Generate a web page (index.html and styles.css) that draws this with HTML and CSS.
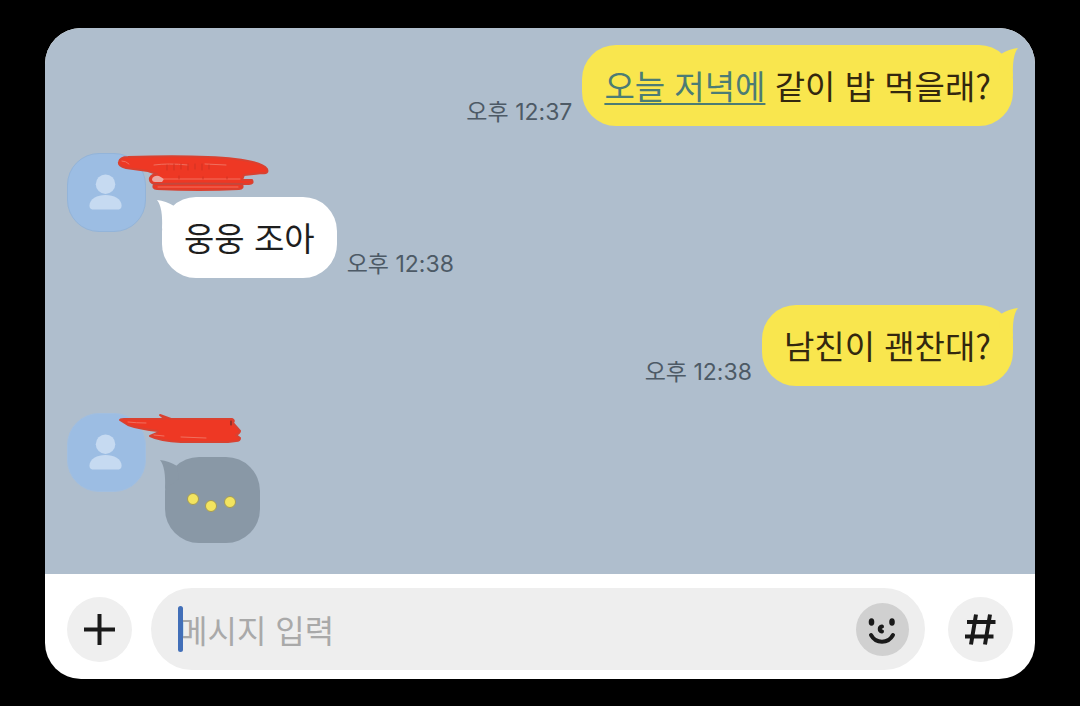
FILE: index.html
```
<!DOCTYPE html>
<html lang="ko">
<head>
    <meta charset="UTF-8">
    <meta name="viewport" content="width=device-width, initial-scale=1.0">
    <title>채팅</title>
    <link rel="stylesheet" href="styles.css">
</head>
<body>
    <div class="phone">
        <main class="chat">
            <div class="row mine">
                <time class="time">오후 12:37</time>
                <div class="bubble yellow">
                    <a href="#">오늘 저녁에</a> 같이 밥 먹을래?
                    <svg class="tail" viewBox="0 0 24 34"><path d="M7 9Q15 4 24 3Q18 10 19 32L5 22Z"/></svg>
                </div>
            </div>

            <div class="row">
                <div class="avatar">
                    <svg viewBox="0 0 79 79"><circle cx="38.500" cy="31" r="10"/><path d="M22 53C22 46 30 42 38.500 42S55 46 55 53Q55 57 50 57H27Q22 57 22 53Z"/></svg>
                </div>
                <div class="content">
                    <div class="name">
                        <svg class="scribble" viewBox="112 150 164 50">
                            <path d="M119 163Q120 158 128 158Q200 156 235 160Q262 163 267 170Q269 175 262 174L244 176L242 181H252Q254 185 249 185H242Q244 190 239 190Q200 192 157 190Q152 190 154 185Q149 183 150 179Q152 175 157 175L148 172L126 169Q118 167 119 163Z"/>
                            <path class="hole" d="M152 180Q154 176 159 177L164 180L162 183H155Q152 183 152 180Z"/>
                            <path class="seam" d="M154 185Q200 184 242 185"/>
                            <path class="gap" d="M122 162Q126 162 129 165M158 188H238M164 180H240M154 166Q168 164 188 166M205 165L226 166"/>
                            <path class="ticks" d="M167 166V171M174 165V171M181 165V170M188 165V171M195 165V170M202 165V171M209 166V170M179 177V180M203 178V180M227 178V180"/>
                        </svg>
                    </div>
                    <div class="line">
                        <div class="bubble white">웅웅 조아
                            <svg class="tail left" viewBox="0 0 24 34"><path d="M7 9Q15 4 24 3Q18 10 19 32L5 22Z"/></svg>
                        </div>
                        <time class="time">오후 12:38</time>
                    </div>
                </div>
            </div>

            <div class="row mine">
                <time class="time">오후 12:38</time>
                <div class="bubble yellow">남친이 괜찬대?
                    <svg class="tail" viewBox="0 0 24 34"><path d="M7 9Q15 4 24 3Q18 10 19 32L5 22Z"/></svg>
                </div>
            </div>

            <div class="row">
                <div class="avatar plain">
                    <svg viewBox="0 0 79 79"><circle cx="38.500" cy="31" r="10"/><path d="M22 53C22 46 30 42 38.500 42S55 46 55 53Q55 57 50 57H27Q22 57 22 53Z"/></svg>
                </div>
                <div class="content">
                    <div class="name">
                        <svg class="scribble" viewBox="112 410 164 50">
                            <path d="M120 421Q120 420 124 420L165 420L160 416L171 420H232Q235 421 233 424L240 432Q240 434 236 436L240 439Q240 442 236 442L228 443H181Q160 442 150 437L157 434L158 432Q140 430 128 426Z"/>
                            <path class="gap" d="M128 423Q136 424 146 424M154 436L164 437M181 438L206 439"/>
                            <path class="name-edge" d="M231 422V426"/>
                        </svg>
                    </div>
                    <div class="typing" role="img" aria-label="입력 중">
                        <svg class="dots" viewBox="0 0 95 86"><circle cx="28" cy="42" r="5.500"/><circle cx="46" cy="49" r="5.500"/><circle cx="65" cy="45" r="5.500"/></svg>
                        <svg class="tail left" viewBox="0 0 24 34"><path d="M7 9Q15 4 24 3Q18 10 19 32L5 22Z"/></svg>
                    </div>
                </div>
            </div>
        </main>

        <form class="input-bar">
            <button class="round-btn" type="button" aria-label="추가">
                <svg viewBox="0 0 65 65"><path d="M32.500 17V48M17 32.500H48"/></svg>
            </button>
            <div class="field">
                <span class="caret"></span>
                <input type="text" placeholder="메시지 입력" aria-label="메시지 입력">
                <button class="emoji-btn" type="button" aria-label="이모티콘">
                    <svg viewBox="0 0 53 53">
                        <ellipse cx="15.500" cy="19" rx="2.800" ry="3.800"/>
                        <ellipse cx="36" cy="19" rx="2.800" ry="3.800"/>
                        <path d="M15 32C20 41 32 41 37 32"/>
                        <path d="M26 23.500C23 24 23 28 26 28.500"/>
                    </svg>
                </button>
            </div>
            <button class="round-btn" type="button" aria-label="샵 검색">
                <svg viewBox="0 0 65 65"><path d="M28 17.500L23 47.500M42 17.500L37 47.500M19 25H47.500M17 39.500H45.500"/></svg>
            </button>
        </form>
    </div>
</body>
</html>
```
FILE: styles.css
```
* {
    box-sizing: border-box;
}
body {
    display: flex;
    min-height: 100vh;
    margin: 0;
    padding: 28px 45px 27px;
    background-color: #000;
    font-family: "Noto Sans CJK KR", sans-serif;
    color: #1e1e1e;
}
.phone {
    display: flex;
    flex-direction: column;
    flex: 1;
    border-radius: 36px;
    overflow: hidden;
    background-color: #fff;
}
.chat {
    display: flex;
    flex-direction: column;
    flex: 1;
    gap: 27px;
    padding: 17px 22px;
    background-color: #afbecd;
}
.row {
    display: flex;
    gap: 16px;
}
.mine {
    justify-content: flex-end;
    align-items: flex-end;
    gap: 10px;
}
.line {
    display: flex;
    align-items: flex-end;
    gap: 10px;
}

/* bubbles */
.bubble {
    position: relative;
    padding: 16px 22px 17px;
    border-radius: 34px;
    font-size: 33px;
    line-height: 48px;
}
.yellow {
    background-color: #f9e64e;
    color: #33280f;
}
.yellow .tail {
    fill: #f9e64e;
}
.yellow a {
    color: #4c7c74;
    text-decoration: underline;
    text-decoration-thickness: 2px;
    text-underline-offset: 4px;
}
.white {
    background-color: #fff;
}
.white .tail {
    fill: #fff;
}
.tail {
    position: absolute;
    top: 0;
    right: -5px;
    width: 24px;
    height: 34px;
}
.tail.left {
    right: auto;
    left: -5px;
    transform: scaleX(-1);
}
.time {
    font-family: Inter, "Noto Sans CJK KR", sans-serif;
    font-size: 23px;
    line-height: 28px;
    color: #4d5a66;
}

/* profile */
.avatar {
    width: 79px;
    height: 79px;
    border: 1px solid #93b4d9;
    border-radius: 32px;
    background-color: #9cbde3;
}
.avatar.plain {
    border-color: #a2bfe0;
}
.avatar svg {
    display: block;
    fill: #c6daf1;
}
.name {
    position: relative;
    height: 44px;
}
.scribble {
    position: absolute;
    top: -4px;
    left: -50px;
    width: 164px;
    height: 50px;
    fill: #ee3824;
    stroke: #d94130;
    stroke-width: 2;
    stroke-linecap: round;
    stroke-linejoin: round;
}
.scribble .hole {
    fill: #e9a9a4;
    stroke: none;
}
.scribble .seam {
    fill: none;
    stroke: #c4483c;
}
.scribble .gap {
    fill: none;
    stroke: #f0705f;
    stroke-width: 1;
}
.scribble .ticks {
    stroke: #cf3223;
    stroke-width: 1;
}
.scribble .name-edge {
    stroke: #402a28;
    stroke-width: 1;
}
.typing {
    position: relative;
    width: 95px;
    height: 86px;
    margin-left: 3px;
    border-radius: 34px;
    background-color: #8998a6;
}
.typing .tail {
    fill: #8998a6;
}
.dots {
    display: block;
    fill: #f3e45f;
    stroke: #a49b55;
    stroke-width: 1;
}

/* input bar */
.input-bar {
    display: flex;
    align-items: center;
    gap: 19px;
    padding: 14px 22px 9px;
}
.round-btn,
.emoji-btn {
    flex-shrink: 0;
    padding: 0;
    border: none;
    border-radius: 50%;
    cursor: pointer;
}
.round-btn {
    width: 65px;
    height: 65px;
    background-color: #efefef;
}
.round-btn svg,
.emoji-btn svg {
    display: block;
    fill: none;
    stroke: #1a1a1a;
    stroke-width: 4;
    stroke-linecap: round;
}
.round-btn svg {
    stroke-linecap: butt;
}
.field {
    position: relative;
    display: flex;
    align-items: center;
    flex: 1;
    min-width: 0;
    height: 82px;
    margin-right: 4px;
    padding: 0 16px 0 27px;
    border-radius: 41px;
    background-color: #eee;
}
.field input {
    flex: 1;
    min-width: 0;
    padding: 0;
    border: none;
    outline: none;
    background: none;
    font-family: inherit;
    font-size: 32px;
    line-height: 48px;
    color: #1e1e1e;
}
.field input::placeholder {
    color: #a9a9a9;
    opacity: 1;
}
.caret {
    position: absolute;
    top: 18px;
    left: 27px;
    width: 5px;
    height: 46px;
    border-radius: 3px;
    background-color: #426fb8;
}
.emoji-btn {
    width: 53px;
    height: 53px;
    background-color: #d0d0d0;
}
.emoji-btn ellipse {
    fill: #1a1a1a;
    stroke: none;
}
```
